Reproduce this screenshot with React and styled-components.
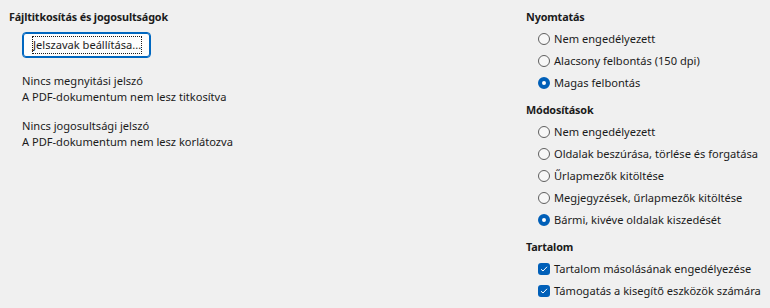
import React from 'react';
import styled, { createGlobalStyle } from 'styled-components';

const GlobalStyle = createGlobalStyle`
  html, body {
    margin: 0;
    padding: 0;
    background: #f0f0f0;
  }
  body {
    font-family: 'Noto Sans', 'Liberation Sans', sans-serif;
    font-size: 11.1px;
    color: #1b1b1b;
  }
`;

const Page = styled.div`
  width: 770px;
  height: 308px;
  box-sizing: border-box;
  padding: 9px 9px 0 9px;
  display: grid;
  grid-template-columns: 1fr 235px;
`;

const Column = styled.div`
  display: flex;
  flex-direction: column;
`;

const Heading = styled.div`
  font-weight: 700;
  font-size: 10.8px;
  letter-spacing: -0.15px;
  line-height: 16px;
  height: 16px;
  margin-top: ${(p) => (p.first ? 0 : 8)}px;
`;

const Button = styled.button`
  align-self: flex-start;
  margin: 7px 0 0 13px;
  width: 129px;
  height: 26px;
  box-sizing: border-box;
  padding: 3px 9px;
  background: #fdfdfd;
  border: 1px solid #0067c0;
  box-shadow: inset 0 0 0 1px #0067c0;
  border-radius: 4px;
  font: inherit;
  color: #1b1b1b;
  display: flex;
  align-items: stretch;
`;

const FocusRect = styled.span`
  flex: 1;
  border: 1px dotted #1b1b1b;
  display: flex;
  align-items: center;
  justify-content: center;
  line-height: 14px;
  white-space: nowrap;
`;

const InfoBlock = styled.div`
  margin: ${(p) => (p.first ? 15 : 13)}px 0 0 13px;
  line-height: 16px;
`;

const OptionList = styled.div`
  display: flex;
  flex-direction: column;
  margin: 3px 0 0 12px;
`;

const Option = styled.label`
  display: flex;
  align-items: center;
  height: 22px;
  gap: 4px;
  line-height: 16px;
  white-space: nowrap;
`;

const Radio = styled.span`
  width: 12px;
  height: 12px;
  border-radius: 50%;
  box-sizing: border-box;
  flex: none;
  border: ${(p) => (p.checked ? '4px solid #005fb8' : '1px solid #5f5f5f')};
  background: ${(p) => (p.checked ? '#ffffff' : '#f7f7f7')};
`;

const Check = styled.span`
  width: 12px;
  height: 12px;
  border-radius: 3px;
  flex: none;
  background: #005fb8;
  display: flex;
  align-items: center;
  justify-content: center;
`;

function RadioOption({ checked, children }) {
  return (
    <Option>
      <Radio checked={checked} />
      <span>{children}</span>
    </Option>
  );
}

function CheckOption({ children }) {
  return (
    <Option>
      <Check>
        <svg width="8" height="8" viewBox="0 0 8 8">
          <path d="M1 4.2 L3 6 L7 1.8" fill="none" stroke="#ffffff" strokeWidth="1" />
        </svg>
      </Check>
      <span>{children}</span>
    </Option>
  );
}

export default function App() {
  return (
    <>
      <GlobalStyle />
      <Page>
        <Column>
          <Heading first>Fájltitkosítás és jogosultságok</Heading>
          <Button>
            <FocusRect>Jelszavak beállítása...</FocusRect>
          </Button>
          <InfoBlock first>
            Nincs megnyitási jelszó
            <br />
            A PDF-dokumentum nem lesz titkosítva
          </InfoBlock>
          <InfoBlock>
            Nincs jogosultsági jelszó
            <br />
            A PDF-dokumentum nem lesz korlátozva
          </InfoBlock>
        </Column>
        <Column>
          <Heading first>Nyomtatás</Heading>
          <OptionList>
            <RadioOption>Nem engedélyezett</RadioOption>
            <RadioOption>Alacsony felbontás (150 dpi)</RadioOption>
            <RadioOption checked>Magas felbontás</RadioOption>
          </OptionList>
          <Heading>Módosítások</Heading>
          <OptionList>
            <RadioOption>Nem engedélyezett</RadioOption>
            <RadioOption>Oldalak beszúrása, törlése és forgatása</RadioOption>
            <RadioOption>Űrlapmezők kitöltése</RadioOption>
            <RadioOption>Megjegyzések, űrlapmezők kitöltése</RadioOption>
            <RadioOption checked>Bármi, kivéve oldalak kiszedését</RadioOption>
          </OptionList>
          <Heading>Tartalom</Heading>
          <OptionList>
            <CheckOption>Tartalom másolásának engedélyezése</CheckOption>
            <CheckOption>Támogatás a kisegítő eszközök számára</CheckOption>
          </OptionList>
        </Column>
      </Page>
    </>
  );
}
